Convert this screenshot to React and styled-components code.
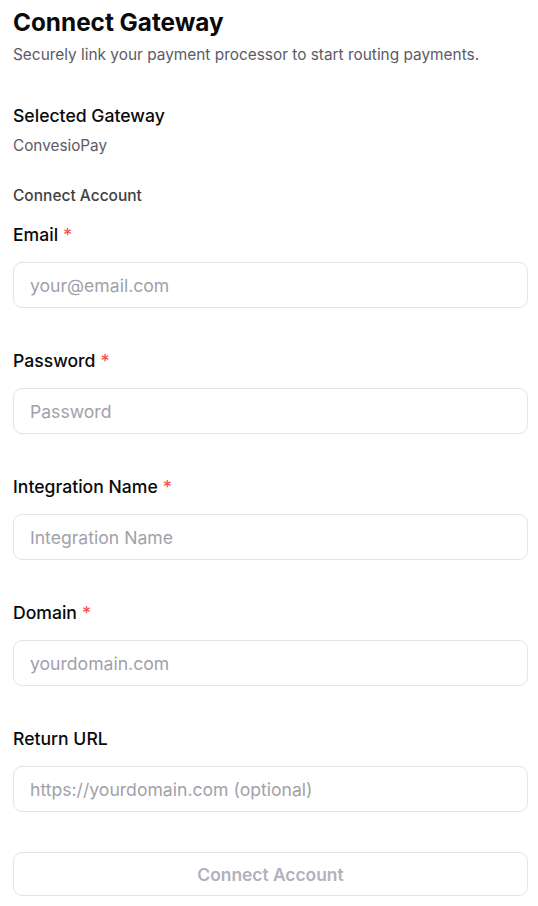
import React from "react";
import styled, { createGlobalStyle } from "styled-components";

const GlobalStyle = createGlobalStyle`
  * { box-sizing: border-box; }
  body {
    margin: 0;
    background: #ffffff;
    font-family: Inter, "Noto Sans", sans-serif;
    color: #0a0a0a;
  }
`;

const Page = styled.div`
  padding: 6px 10px 10px 13px;
  display: flex;
  flex-direction: column;
`;

const Title = styled.h1`
  margin: 0;
  font-size: 24.3px;
  font-weight: 700;
  line-height: 32px;
`;

const Subtitle = styled.p`
  margin: 6px 0 0;
  font-size: 15.4px;
  line-height: 22px;
  color: #5b5b66;
`;

const Section = styled.div`
  margin-top: 38px;
  display: flex;
  flex-direction: column;
`;

const SectionTitle = styled.h2`
  margin: 0;
  font-size: 17.6px;
  font-weight: 500;
  line-height: 24px;
`;

const SectionValue = styled.p`
  margin: 8px 0 0;
  font-size: 15.3px;
  line-height: 20px;
  color: #5b5b66;
`;

const SubHeading = styled.p`
  margin: 29px 0 0;
  font-size: 15.5px;
  font-weight: 500;
  line-height: 22px;
  color: #3f3f46;
`;

const Form = styled.form`
  margin-top: 16px;
  display: flex;
  flex-direction: column;
  gap: 41px;
`;

const Field = styled.div`
  display: flex;
  flex-direction: column;
  gap: 15px;
`;

const Label = styled.label`
  font-size: 17.6px;
  font-weight: 500;
  line-height: 24px;
  color: #0a0a0a;
`;

const Required = styled.span`
  color: #f05252;
  margin-left: 5px;
`;

const Input = styled.input`
  width: 100%;
  height: 46px;
  padding: 0 16px;
  border: 1px solid #e4e4e7;
  border-radius: 9px;
  background: #ffffff;
  font-family: inherit;
  font-size: 17.6px;
  color: #0a0a0a;
  outline: none;

  &::placeholder {
    color: #a1a1aa;
  }
`;

const Button = styled.button`
  margin-top: 40px;
  width: 100%;
  height: 44px;
  border: 1px solid #e4e4e7;
  border-radius: 9px;
  background: #ffffff;
  font-family: inherit;
  font-size: 17.4px;
  font-weight: 600;
  color: #b4b0bc;
  cursor: not-allowed;
`;

const fields = [
  { id: "email", label: "Email", placeholder: "your@email.com", required: true, type: "email" },
  { id: "password", label: "Password", placeholder: "Password", required: true, type: "password" },
  { id: "name", label: "Integration Name", placeholder: "Integration Name", required: true, type: "text" },
  { id: "domain", label: "Domain", placeholder: "yourdomain.com", required: true, type: "text" },
  { id: "return", label: "Return URL", placeholder: "https://yourdomain.com (optional)", required: false, type: "text" },
];

export default function App() {
  return (
    <>
      <GlobalStyle />
      <Page>
        <Title>Connect Gateway</Title>
        <Subtitle>Securely link your payment processor to start routing payments.</Subtitle>

        <Section>
          <SectionTitle>Selected Gateway</SectionTitle>
          <SectionValue>ConvesioPay</SectionValue>
        </Section>

        <SubHeading>Connect Account</SubHeading>

        <Form onSubmit={(e) => e.preventDefault()}>
          {fields.map((f) => (
            <Field key={f.id}>
              <Label htmlFor={f.id}>
                {f.label}
                {f.required && <Required>*</Required>}
              </Label>
              <Input id={f.id} type={f.type} placeholder={f.placeholder} />
            </Field>
          ))}
        </Form>

        <Button type="button" disabled>Connect Account</Button>
      </Page>
    </>
  );
}
